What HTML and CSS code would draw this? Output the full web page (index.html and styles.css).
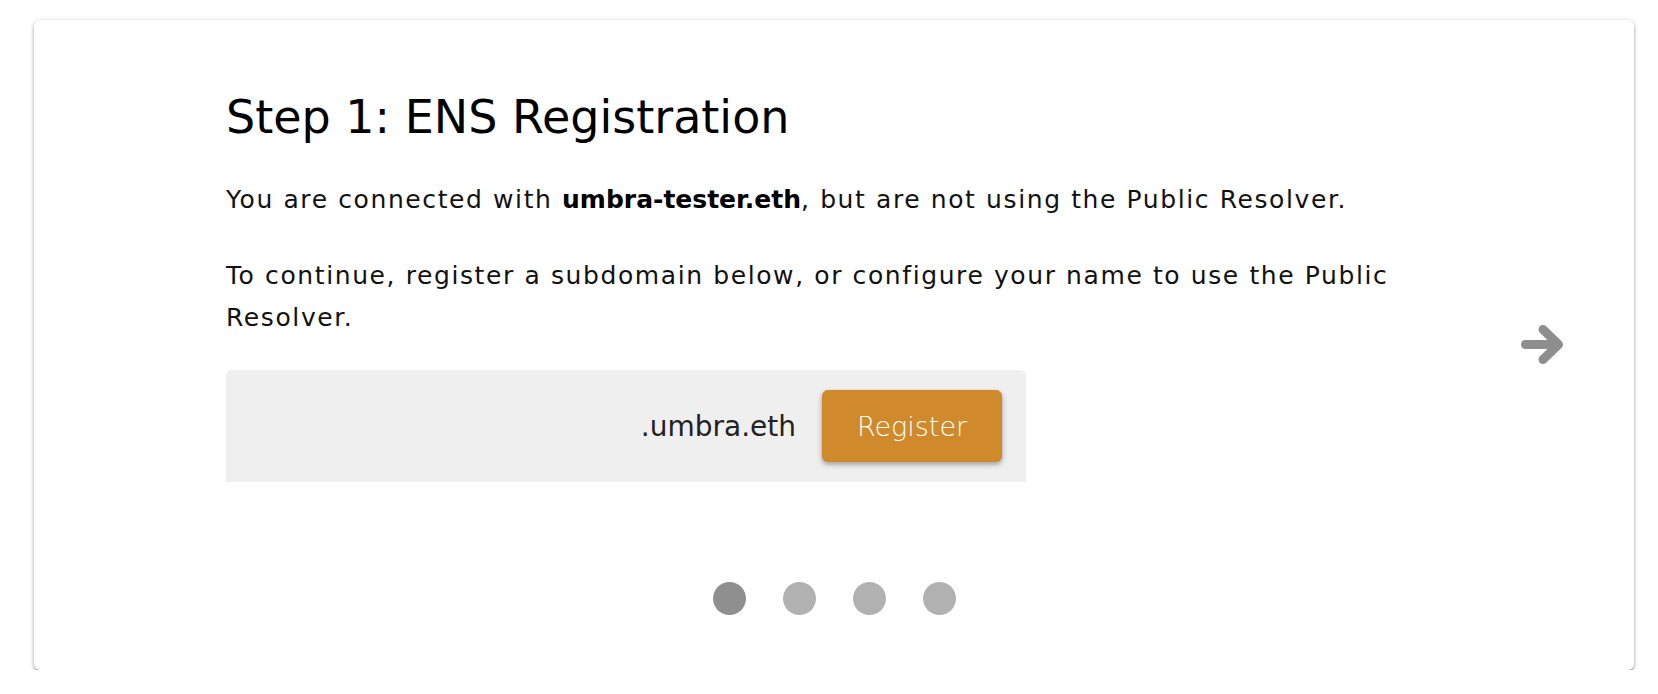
FILE: index.html
```html
<!DOCTYPE html>
<html lang="en">
<head>
<meta charset="utf-8">
<title>Step 1: ENS Registration</title>
<link rel="stylesheet" href="styles.css">
</head>
<body>
  <div class="card">
    <div class="slide">
      <h1 class="title">Step 1: ENS Registration</h1>
      <p class="text">You are connected with <strong>umbra-tester.eth</strong>, but are not using the Public Resolver.</p>
      <p class="text">To continue, register a subdomain below, or configure your name to use the Public Resolver.</p>
      <div class="field">
        <div class="field-input"></div>
        <span class="suffix">.umbra.eth</span>
        <button class="btn-register" type="button">Register</button>
      </div>
    </div>
    <div class="dots">
      <span class="dot dot-active"></span>
      <span class="dot"></span>
      <span class="dot"></span>
      <span class="dot"></span>
    </div>
    <button class="arrow" type="button" aria-label="Next">
      <svg width="42" height="42" viewBox="0 0 42 42" fill="none" stroke="#8e8e8e" stroke-width="9" stroke-linecap="round" stroke-linejoin="round">
        <path d="M4.5 20.5H36.5"/>
        <path d="M22 5.5L37.5 20.5L22 35.5"/>
      </svg>
    </button>
  </div>
</body>
</html>
```

FILE: styles.css
```css
html, body {
  margin: 0;
  padding: 0;
  background: #ffffff;
}

body {
  font-family: "DejaVu Sans", "Liberation Sans", sans-serif;
  color: #111111;
}

.card {
  position: relative;
  box-sizing: border-box;
  width: 1600px;
  height: 650px;
  margin: 20px 0 0 34px;
  background: #ffffff;
  border-radius: 6px;
  box-shadow: 0 1px 5px rgba(0, 0, 0, 0.2), 0 2px 3px rgba(0, 0, 0, 0.26), 0 3px 1px -2px rgba(0, 0, 0, 0.14);
  display: flex;
  flex-direction: column;
  padding: 69px 0 55px 192px;
}

.slide {
  width: 1216px;
}

.title {
  margin: 0;
  font-size: 46px;
  line-height: 56px;
  font-weight: 400;
  color: #000000;
}

.text {
  margin: 34px 0 0 0;
  font-size: 25px;
  line-height: 42px;
  letter-spacing: 1.6px;
  font-weight: 400;
}

.text strong {
  font-weight: 700;
  letter-spacing: 0;
  color: #000000;
}

.field {
  margin-top: 31px;
  width: 800px;
  height: 112px;
  box-sizing: border-box;
  background: #efefef;
  border-radius: 6px 6px 0 0;
  display: flex;
  align-items: center;
  padding: 0 24px 0 0;
}

.field-input {
  flex: 1;
}

.suffix {
  font-size: 28px;
  color: #222222;
  margin-right: 26px;
}

.btn-register {
  width: 180px;
  height: 72px;
  border: none;
  border-radius: 6px;
  background: #d08a2b;
  color: #ffffff;
  font-family: inherit;
  font-size: 27px;
  font-weight: 300;
  box-shadow: 0 2px 4px rgba(0, 0, 0, 0.25), 0 3px 6px rgba(0, 0, 0, 0.12);
  cursor: pointer;
}

.dots {
  margin-top: auto;
  margin-left: -192px;
  display: flex;
  justify-content: center;
  gap: 37px;
}

.dot {
  width: 33px;
  height: 33px;
  border-radius: 50%;
  background: #b1b1b1;
}

.dot-active {
  background: #8f8f8f;
}

.arrow {
  position: absolute;
  right: 71px;
  top: 50%;
  transform: translateY(-50%);
  width: 42px;
  height: 42px;
  padding: 0;
  border: none;
  background: transparent;
  display: flex;
  cursor: pointer;
}
```
